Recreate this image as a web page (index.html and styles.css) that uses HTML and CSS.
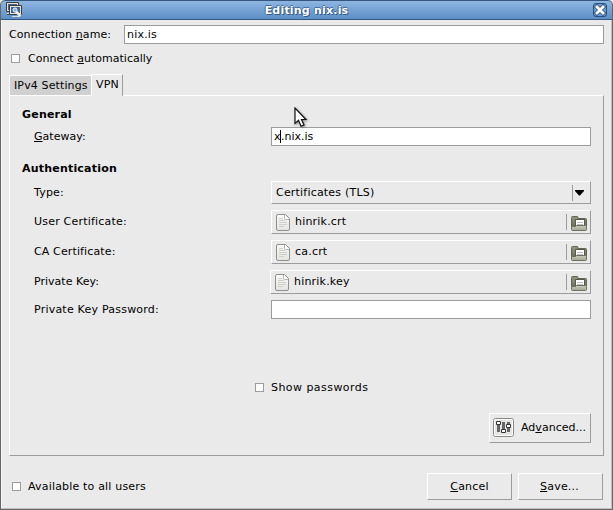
FILE: index.html
```html
<!DOCTYPE html>
<html lang="en">
<head>
<meta charset="utf-8">
<title>Editing nix.is</title>
<link rel="stylesheet" href="styles.css">
</head>
<body>
<svg class="defs" width="0" height="0" aria-hidden="true">
  <defs>
    <linearGradient id="fold" x1="0" y1="0" x2="0" y2="1"><stop offset="0" stop-color="#94977f"/><stop offset="1" stop-color="#626653"/></linearGradient>
    <linearGradient id="front" x1="0" y1="0" x2="0" y2="1"><stop offset="0" stop-color="#c8cabb"/><stop offset="1" stop-color="#a3a694"/></linearGradient>
    <linearGradient id="paper" x1="0" y1="0" x2="0" y2="1"><stop offset="0" stop-color="#fafaf9"/><stop offset="1" stop-color="#e4e4e1"/></linearGradient>
    <symbol id="doc" viewBox="0 0 14 17">
      <path d="M2 .5h7.500l4 4V15q0 1.500-1.500 1.500H2Q.5 16.500.5 15V2Q.5.5 2 .5z" fill="url(#paper)" stroke="#8f8f8d"/>
      <path d="M8.500 1v3.500q0 1 1 1H13" fill="#fff" stroke="#b5b5b3"/>
      <path d="M3 4.500h4M3 6.500h6M3 8.500h8M3 10.500h8M3 12.500h5" stroke="#cfcfcc"/>
    </symbol>
    <symbol id="folder" viewBox="0 0 16 15">
      <path d="M.5 13V1.500q0-1 1-1H6q1 0 1 1v1h7.500q1 0 1 1V13z" fill="url(#fold)" stroke="#626553"/>
      <path d="M5 4h8v6H5z" fill="#fff"/>
      <path d="M4.500 10V3.500h9V10" fill="none" stroke="#55594a"/>
      <path d="M6 6.500h6M6 8.500h6" stroke="#bbb"/>
      <path d="M.5 10.500h4l1-1h9q1 0 1 1v3q0 1-1 1h-13q-1 0-1-1z" fill="url(#front)" stroke="#6d705e"/>
    </symbol>
  </defs>
</svg>
<div class="window">
  <header class="titlebar">
    <svg class="app-icon" width="17" height="16" viewBox="0 0 17 16">
      <path d="M.5.500h12v9H.5z" fill="#e4e4dc" stroke="#3d3d38"/>
      <path d="M2 2h9v6H2z" fill="#3d6696"/>
      <path d="M1 11.500h6" stroke="#ddd"/><path d="M1 12.500h6" stroke="#444"/>
      <path d="M3.500 3.500h12v9h-12z" fill="#e4e4dc" stroke="#3d3d38"/>
      <path d="M5 5h9v6H5z" fill="#3d6696"/>
      <path d="M6 14.500h8" stroke="#ddd"/>
      <path d="M10 9.500l4.500 4.500" stroke="#eee" stroke-width="2.500"/><circle cx="9" cy="8" r="2" fill="#8baed5" stroke="#eee"/>
    </svg>
    <h1 class="title">Editing nix.is</h1>
    <svg class="close" width="14" height="14" viewBox="0 0 14 14">
      <rect x=".5" y=".5" width="13" height="13" rx="2.500" fill="#6e9cce" stroke="#284f7c"/>
      <path d="M4 4l6 6M10 4l-6 6" stroke="#32567f" stroke-width="4.500" stroke-linecap="square"/>
      <path d="M4 4l6 6M10 4l-6 6" stroke="#fff" stroke-width="2.800" stroke-linecap="square"/>
    </svg>
  </header>
  <main class="content">
    <div class="name-row"><label class="t-name">Connection <u>n</u>ame:</label><div class="entry name-entry"><span>nix.is</span></div></div>
    <div class="check auto"><i class="box"></i><span class="t-auto">Connect <u>a</u>utomatically</span></div>
    <nav class="tabs"><div class="tab"><span class="t-ipv4">IPv4 Settings</span></div><div class="tab active"><span>VPN</span></div></nav>
    <section class="pane">
      <h2 class="general">General</h2>
      <div class="row gateway"><label class="t-gateway"><u>G</u>ateway:</label><div class="entry"><span class="t-x">x</span><i class="caret"></i><span class="t-gw">.nix.is</span></div></div>
      <h2 class="authentication">Authentication</h2>
      <div class="row type"><label>Type:</label><div class="button combo"><span>Certificates (TLS)</span><i class="divider"></i><svg width="9" height="6" viewBox="0 0 9 6"><path d="M0 0h9v1L5 5.500H4L0 1z"/></svg></div></div>
      <div class="row file"><label>User Certificate:</label><div class="button chooser"><svg width="14" height="17"><use href="#doc"/></svg><span>hinrik.crt</span><i class="divider"></i><svg width="16" height="15"><use href="#folder"/></svg></div></div>
      <div class="row file"><label class="t-ca">CA Certificate:</label><div class="button chooser"><svg width="14" height="17"><use href="#doc"/></svg><span>ca.crt</span><i class="divider"></i><svg width="16" height="15"><use href="#folder"/></svg></div></div>
      <div class="row file"><label class="t-key">Private Key:</label><div class="button chooser wide"><svg width="14" height="17"><use href="#doc"/></svg><span>hinrik.key</span><i class="divider"></i><svg width="16" height="15"><use href="#folder"/></svg></div></div>
      <div class="row password"><label class="t-pass">Private Key Password:</label><div class="entry"></div></div>
      <div class="check show"><i class="box"></i><span class="t-show">Show passwords</span></div>
      <div class="button advanced">
        <svg width="22" height="20" viewBox="0 0 22 20">
          <rect x=".5" y=".5" width="20" height="18" rx="2" fill="#f2f2f0" stroke="#888"/>
          <rect x="1.500" y="1.500" width="18" height="16" rx="1" fill="#e5e5e3" stroke="#fff"/>
          <path d="M5.500 4v10M10.500 4v10M15.500 4v10" stroke="#666" stroke-width="3"/>
          <path d="M3.500 3.500h4v3h-4zM8.500 11.500h4v3h-4zM13.500 6.500h4v3h-4z" fill="#fff" stroke="#333"/>
        </svg>
        <span class="t-adv">Ad<u>v</u>anced...</span>
      </div>
    </section>
    <footer class="actions">
      <div class="check"><i class="box"></i><span class="t-avail">Available to all users</span></div>
      <div class="button action cancel"><span><u>C</u>ancel</span></div>
      <div class="button action save"><span><u>S</u>ave...</span></div>
    </footer>
  </main>
</div>
<svg class="pointer" width="14" height="21" viewBox="0 0 14 21"><path d="M1 1v15.500l3.500-3.200 2.500 6 3-1.300-2.500-5.500H12z" fill="#fff" stroke="#111" stroke-width="1.200"/></svg>
</body>
</html>
```

FILE: styles.css
```css
* { box-sizing: border-box; }
body { margin: 0; font: 11px/13px "DejaVu Sans", sans-serif; color: #000; background: #eaeaea; overflow: hidden; }
.defs, .pointer { position: absolute; }
.pointer { left: 294px; top: 107px; filter: drop-shadow(1px 1px 1px #0006); }
svg { display: block; flex: none; }
i { display: block; flex: none; }
h1, h2 { margin: 0; font-size: 11px; line-height: 13px; font-weight: bold; letter-spacing: .2px; }
label, span { white-space: pre; letter-spacing: .2px; }
u { text-underline-offset: 1px; text-decoration-thickness: 1px; text-decoration-skip-ink: none; }
.t-name { letter-spacing: .09px; }
.t-auto, .t-gateway, .t-key, .t-adv { letter-spacing: .02px; }
.t-ca, .t-ipv4 { letter-spacing: .13px; }
.t-pass { letter-spacing: .22px; }
.t-show { letter-spacing: .45px; }
.t-avail { letter-spacing: .18px; }
.t-x { letter-spacing: -.6px; }
.t-gw { letter-spacing: 0; }
.window { width: 613px; height: 510px; border: solid #666; border-width: 0 1px 1px; background: #eaeaea; box-shadow: inset -1px -1px #c2c2c2, inset 1px 0 #f8f8f8; border-radius: 5px 5px 0 0; overflow: hidden; }
.titlebar { height: 20px; margin: 0 -1px; padding: 0 5px; display: flex; align-items: center; border: 1px solid #34577f; border-radius: 5px 5px 0 0; background: linear-gradient(#8fb5e1, #5c8fc6); }
.title { flex: 1; padding-right: 3px; text-align: center; color: #fff; text-shadow: 1px 1px #335a8a, -1px 0 #41699a, 0 -1px #41699a; }
.content { padding: 5px 8px 0; }
.name-row { height: 19px; display: flex; align-items: center; }
.name-row label { width: 115px; }
.entry { height: 19px; border: 1px solid #9c9c9c; background: #fff; padding-left: 2px; display: flex; align-items: center; }
.name-entry { width: 480px; }
.check { display: flex; align-items: center; gap: 8px; height: 13px; }
.box { width: 9px; height: 9px; border: 1px solid #9c9c9c; background: #fff; }
.auto { margin: 8px 0 0 2px; }
.tabs { display: flex; align-items: flex-end; height: 22px; margin-top: 9px; }
.tab { height: 20px; width: 82px; margin-bottom: 1px; padding: 3px 0 0 4px; background: #d0d0d0; border-top: 1px solid #fff; border-left: 1px solid #fff; }
.tab.active { width: 32px; height: 22px; margin: 0; background: #eaeaea; border-right: 1px solid #9c9c9c; position: relative; }
.pane { width: 595px; height: 361px; margin-top: -1px; border: 1px solid #fff; border-right-color: #9c9c9c; border-bottom-color: #9c9c9c; padding: 12px 12px 0; }
.row { display: flex; align-items: center; padding-left: 12px; }
.row label { width: 237px; }
.row > .entry, .row > .button { width: 320px; }
.row > .wide { width: 321px; margin-left: -1px; }
.gateway { height: 19px; margin-top: 6px; }
.caret { width: 1px; height: 13px; background: #000; }
.authentication { margin-top: 16px; }
.button { display: flex; align-items: center; border: 1px solid #fff; border-right-color: #9c9c9c; border-bottom-color: #9c9c9c; background: #eaeaea; }
.combo { height: 23px; padding: 0 6px 0 4px; }
.combo span, .chooser span { flex: 1; }
.divider { width: 1px; height: 16px; background: #9c9c9c; }
.combo svg { margin-left: 2px; }
.chooser { height: 24px; padding: 0 3px 0 4px; }
.chooser span { margin-left: 5px; padding-bottom: 2px; }
.chooser svg:last-child { margin-left: 4px; margin-top: 2px; }
.type { height: 23px; margin-top: 6px; }
.file { height: 24px; margin-top: 6px; }
.file label { padding-bottom: 2px; }
.password { height: 19px; margin-top: 6px; }
.show { margin: 62px 0 0 233px; gap: 7px; }
.advanced { width: 102px; height: 30px; margin: 19px 0 0 467px; padding-left: 3px; gap: 6px; }
.advanced span { padding-bottom: 1px; }
.actions { width: 594px; height: 27px; margin-top: 17px; display: flex; align-items: center; }
.actions .check { flex: 1; padding-left: 3px; gap: 7px; }
.action { width: 85px; height: 27px; justify-content: center; }
.cancel { margin-right: 6px; }
.save { padding-right: 2px; }
```
